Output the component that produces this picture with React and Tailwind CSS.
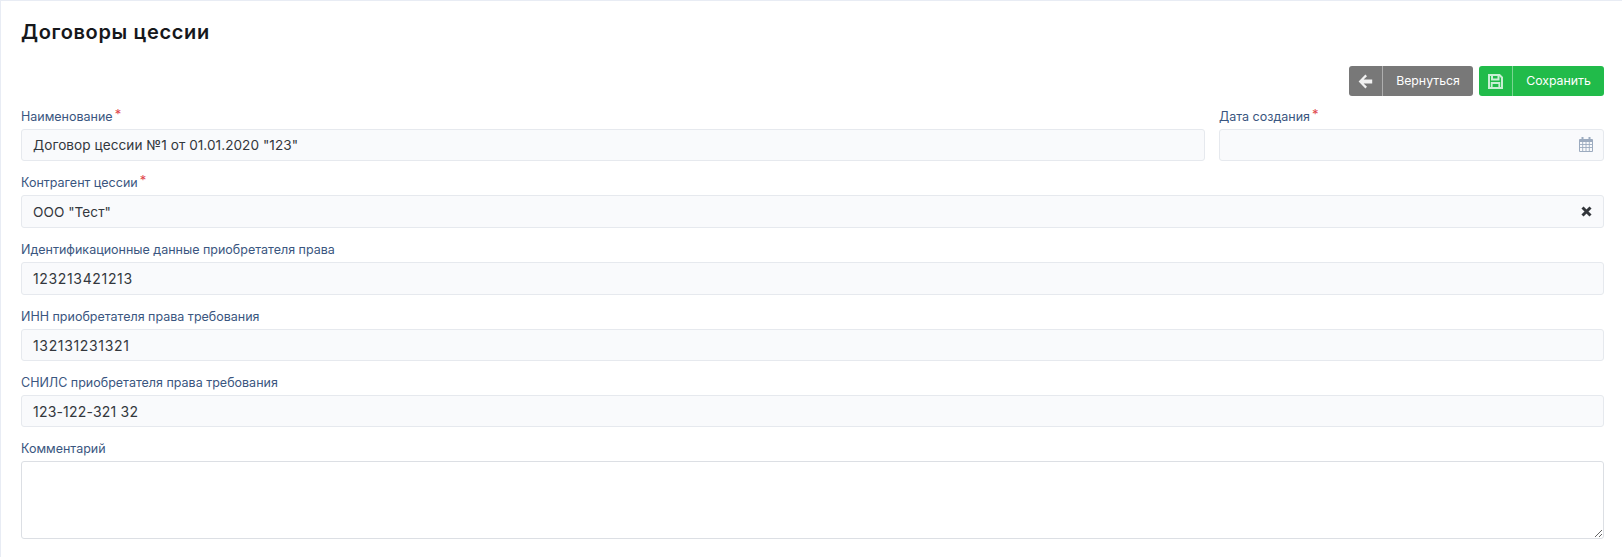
import React from "react";

const fieldClass =
  "h-full w-full rounded-[3px] border border-[#e6e9ee] bg-[#f9fafc] px-[11px] text-[#33373d] outline-none";

const ArrowIcon = () => (
  <svg width="15" height="15" viewBox="0 0 15 15" fill="#f2f2f2">
    <path d="M7.4 0.6 9 2.2 5.6 5.5H14.2V9.5H5.6L9 12.8 7.4 14.4 0.6 7.5Z" />
  </svg>
);

const SaveIcon = () => (
  <svg width="15" height="15" viewBox="0 0 15 15" fill="none" stroke="#c9efd4">
    <path d="M1 1H11.5L14 3.5V14H1Z" strokeWidth="2" />
    <path d="M4 1.5V5.5H10.5V1.5" strokeWidth="2" />
    <path d="M3.7 14V9H11.3V14" strokeWidth="1.8" />
  </svg>
);

const CalendarIcon = () => (
  <svg className="absolute right-[11px] top-[7px]" width="14" height="16" viewBox="0 0 14 16" fill="none" stroke="#9cabbf">
    <path d="M0.5 3.5H13.5V15.5H0.5Z" />
    <path d="M0.5 4.5H13.5M0.5 5.5H13.5" />
    <path d="M0.5 8.5H13.5M0.5 11.5H13.5M3.7 6V15M7 6V15M10.3 6V15" strokeWidth="0.9" />
    <path d="M3.5 1V4M10.5 1V4" strokeWidth="2" />
  </svg>
);

const ClearIcon = () => (
  <svg className="absolute right-[12px] top-[11px]" width="11" height="11" viewBox="0 0 11 11" fill="none" stroke="#33363b" strokeWidth="3">
    <path d="M1.5 1.5 9.5 9.5M9.5 1.5 1.5 9.5" />
  </svg>
);

const Label = ({ children, required = false }) => (
  <label className="flex h-[22px] items-start text-[12.5px] leading-[19px] text-[#3a5680]">
    {children}
    {required && <span className="ml-[2px] mt-[1px] text-[13px] leading-[13px] text-[#e0474c]">*</span>}
  </label>
);

const Field = ({ label, value, required = false, height = "h-[33px]", textStyle = "text-[13.6px] tracking-[0.05px]", children }) => (
  <div className="flex flex-col">
    <Label required={required}>{label}</Label>
    <div className={`relative ${height}`}>
      <input className={`${fieldClass} ${textStyle}`} defaultValue={value} readOnly />
      {children}
    </div>
  </div>
);

const ActionButton = ({ icon, text, color, width }) => (
  <button className={`flex h-[30px] items-center rounded-[3px] text-[12.3px] text-white ${color} ${width}`}>
    <span className="flex h-full w-[34px] shrink-0 items-center justify-center border-r border-white/40">
      {icon}
    </span>
    <span className="flex-1 text-center">{text}</span>
  </button>
);

export default function App() {
  return (
    <div className="h-[557px] overflow-hidden border-l border-t border-[#e8ecf4] bg-white pl-[20px] pr-[18px] font-['Inter',sans-serif]">
      <h1 className="pt-[18px] text-[20px] font-semibold leading-[26px] tracking-[0.65px] text-[#16181c]">
        Договоры цессии
      </h1>

      <div className="mt-[21px] flex justify-end gap-[6px]">
        <ActionButton icon={<ArrowIcon />} text="Вернуться" color="bg-[#787878]" width="w-[124px]" />
        <ActionButton icon={<SaveIcon />} text="Сохранить" color="bg-[#21bb4a]" width="w-[125px]" />
      </div>

      <div className="mt-[11px] flex flex-col gap-[12px]">
        <div className="flex gap-[14px]">
          <div className="flex-1">
            <Field label="Наименование" value={'Договор цессии №1 от 01.01.2020 "123"'} required height="h-[32px]" />
          </div>
          <div className="w-[385px]">
            <Field label="Дата создания" value="" required height="h-[32px]">
              <CalendarIcon />
            </Field>
          </div>
        </div>
        <Field label="Контрагент цессии" value={'ООО "Тест"'} required>
          <ClearIcon />
        </Field>
        <Field label="Идентификационные данные приобретателя права" value="123213421213" textStyle="text-[14px] tracking-[0.65px]" />
        <Field label="ИНН приобретателя права требования" value="132131231321" height="h-[32px]" textStyle="text-[14px] tracking-[0.65px]" />
        <Field label="СНИЛС приобретателя права требования" value="123-122-321 32" height="h-[32px]" textStyle="text-[14px] tracking-[0.2px]" />
        <div className="flex flex-col">
          <Label>Комментарий</Label>
          <textarea className="h-[78px] w-full rounded-[3px] border border-[#dcdfe4] bg-white px-[11px] text-[14px] outline-none" />
        </div>
      </div>
    </div>
  );
}
